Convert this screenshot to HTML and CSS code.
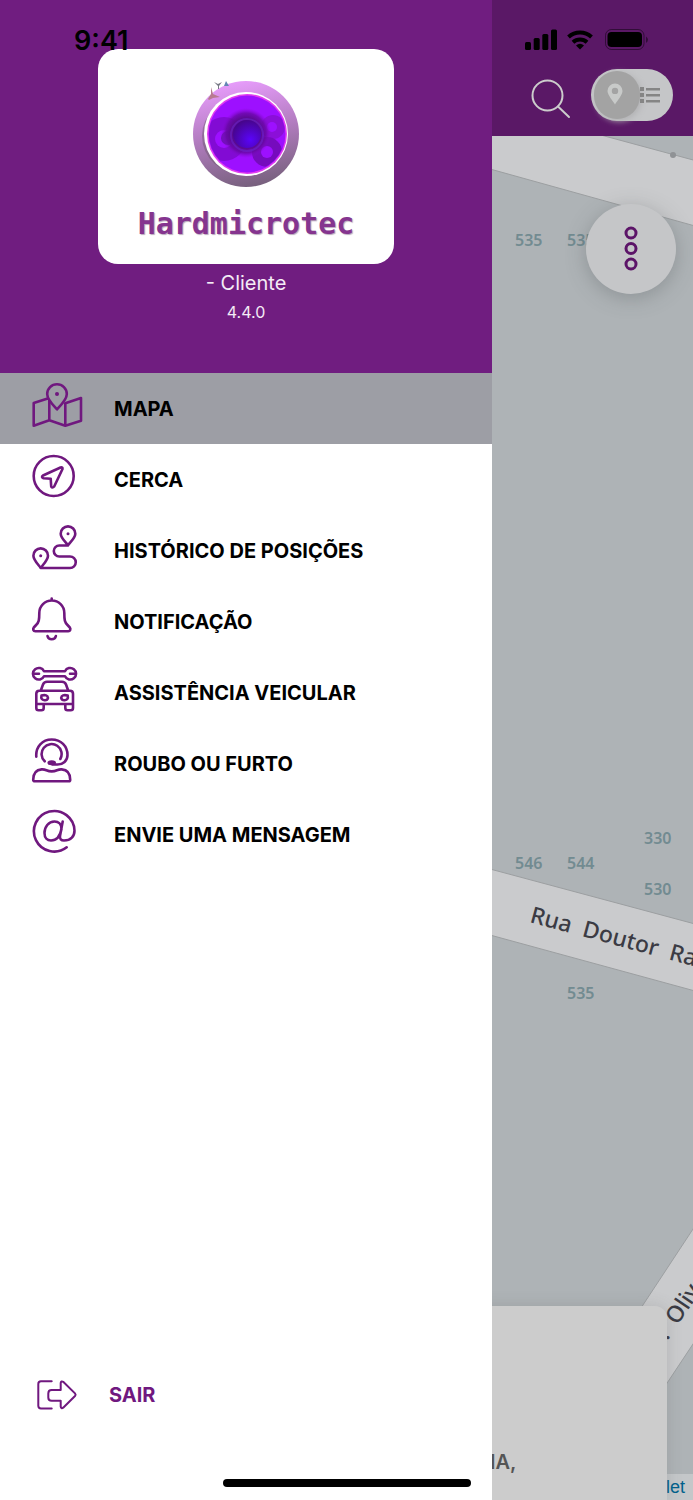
FILE: index.html
```html
<!DOCTYPE html>
<html lang="pt-BR">
<head>
<meta charset="utf-8">
<meta name="viewport" content="width=device-width, initial-scale=1">
<title>Hardmicrotec - Cliente</title>
<link rel="stylesheet" href="styles.css">
</head>
<body>
<div class="screen">
  <aside class="drawer">
    <header class="brand">
      <div class="logo">
        <svg class="emblem" viewBox="0 0 108 108" aria-hidden="true">
          <defs>
            <linearGradient id="rim" x1="0.4" y1="0" x2="0.6" y2="1">
              <stop offset="0" stop-color="#e79cfb"/>
              <stop offset="0.5" stop-color="#b07bbd"/>
              <stop offset="1" stop-color="#76607c"/>
            </linearGradient>
            <radialGradient id="halo">
              <stop offset="0.6" stop-color="#5a0a90"/>
              <stop offset="0.8" stop-color="#6808a4" stop-opacity="0.8"/>
              <stop offset="1" stop-color="#8a0bd8" stop-opacity="0"/>
            </radialGradient>
            <radialGradient id="core" cx="0.62" cy="0.7" r="0.7">
              <stop offset="0" stop-color="#5a04fa"/>
              <stop offset="1" stop-color="#46058c"/>
            </radialGradient>
            <clipPath id="lens"><circle cx="55" cy="54" r="38"/></clipPath>
          </defs>
          <circle cx="54" cy="54" r="53" fill="url(#rim)"/>
          <ellipse cx="52" cy="56" rx="42" ry="39" fill="#6d5a70" opacity="0.5"/>
          <circle cx="54" cy="54" r="42" fill="#fff"/>
          <circle cx="55" cy="54" r="40" fill="#e13df0"/>
          <circle cx="55" cy="54" r="38.500" fill="#9d10ff"/>
          <g clip-path="url(#lens)">
            <circle cx="32" cy="59" r="22" fill="#820bd4"/>
            <circle cx="32" cy="59" r="9" fill="#9d10ff"/>
            <circle cx="81" cy="47" r="12" fill="#8b0fd8"/>
            <circle cx="80" cy="47" r="5" fill="#9d10ff"/>
            <circle cx="75" cy="72" r="15" fill="#760bbd"/>
            <circle cx="75" cy="72" r="6" fill="#9d10ff"/>
            <circle cx="36" cy="58" r="7" fill="#7010b8"/>
          </g>
          <circle cx="54" cy="53" r="25" fill="url(#halo)"/>
          <circle cx="55" cy="55" r="16" fill="none" stroke="#7030e0" stroke-width="2" opacity="0.4"/>
          <circle cx="55" cy="54" r="14" fill="url(#core)"/>
          <path d="M19 7l2 7 7 3-7 1-4 2-1-1 3-5z" fill="#b87a91"/>
          <path d="M22 2l4 2 4-2-3 4v3h-1V6z" fill="#777985"/>
          <path d="M34 1l3 5h-5z" fill="#6386b4"/>
        </svg>
        <div class="wordmark">Hardmicrotec</div>
      </div>
      <div class="product">- Cliente</div>
      <div class="version">4.4.0</div>
    </header>
    <nav class="menu">
      <a class="item selected" href="#mapa">
        <svg class="icon" viewBox="0 0 54 48" aria-hidden="true"><path d="M19.300 17L3.700 22v22.700l15.600-5.400zM19.300 39.300l16 5.400V22.300L51 17v22.700l-15.700 5"/><path class="pin" d="M27 28.300c-3-3.300-9.800-9.300-9.800-15.300a9.800 9.800 0 0 1 19.600 0c0 6-6.800 12-9.800 15.300z"/><circle class="solid" cx="27" cy="13" r="2"/></svg>
        <span>MAPA</span>
      </a>
      <a class="item" href="#cerca">
        <svg class="icon" viewBox="0 0 54 48" aria-hidden="true"><circle cx="23.700" cy="24" r="20"/><path d="M30.500 15.500L13 23.500q-2.200 1.700.5 2.700l7.200.5.500 7.800q1.200 2 3 0L32.500 17q.3-2.200-2-1.500z"/></svg>
        <span>CERCA</span>
      </a>
      <a class="item" href="#historico">
        <svg class="icon" viewBox="0 0 54 48" aria-hidden="true"><path d="M38 22.300c-2-3-7.300-7.300-7.300-11.600a7.300 7.300 0 0 1 14.600 0c0 4.300-5.300 8.600-7.300 11.600zM10.700 45c-2-3-7.300-8-7.300-12.300a7.300 7.300 0 0 1 14.600 0c0 4.300-5.300 9.300-7.300 12.300zM38 22.500h-8.700a5.500 5.500 0 0 0 0 11H40A5.700 5.700 0 0 1 40 45H10.700"/><circle class="solid" cx="38" cy="10.700" r="1.500"/><circle class="solid" cx="10.700" cy="32.700" r="1.500"/></svg>
        <span>HISTÓRICO DE POSIÇÕES</span>
      </a>
      <a class="item" href="#notificacao">
        <svg class="icon" viewBox="0 0 54 48" aria-hidden="true"><path d="M21.700 4.500v2M9.300 19a12.500 12.500 0 0 1 25 0c0 7 .4 9.200 3.200 12l2.300 2.500c1.200 1.700.4 3.700-1.500 3.700h-33c-2 0-2.700-2-1.500-3.700L6.100 31c2.800-2.800 3.200-5 3.200-12zM17.500 42q.8 3.300 4.200 3.300t4.200-3.300"/></svg>
        <span>NOTIFICAÇÃO</span>
      </a>
      <a class="item" href="#assistencia">
        <svg class="icon" viewBox="0 0 54 48" aria-hidden="true"><path d="M14 6.300H35a5.800 5.800 0 1 1 0 4.900H14a5.800 5.800 0 1 1 0-4.900zM4.500 8.700h4.500M40 8.700h4.500M11 25l2-5.500q1-2.800 4-2.800h15q3 0 4 2.800l2 5.500M9.300 25.700h30.700q3 0 3 3v10.300H6.300V28.700q0-3 3-3zM6.300 39v4q0 2.300 2.300 2.300h2.800q2.300 0 2.300-2.300v-4M35.300 39v4q0 2.300 2.300 2.300h3.100q2.300 0 2.300-2.300v-4"/><path d="M11.500 30.500q6-1.500 6.500 2.500-.7 2.500-3.500 2.200-4-.4-3-4.700zM37.700 30.500q-6-1.500-6.500 2.500.7 2.500 3.500 2.200 4-.4 3-4.700z"/></svg>
        <span>ASSISTÊNCIA VEICULAR</span>
      </a>
      <a class="item" href="#roubo">
        <svg class="icon" viewBox="0 0 54 48" aria-hidden="true"><path d="M6.300 20.700C5.500 10.500 12.500 3.500 21.700 3.500S37.500 10 37.500 19c0 6-4.500 9.500-10 9.500h-5M14.700 25.300a10 10 0 1 1 15.600-2.300M5 45.300h34q1.200 0 1.200-1.500 0-9.600-8.500-10.400-2.200-.2-4.700.9-5.300 2.200-10.600 0-2.500-1.100-4.700-.9-8.500.8-8.500 10.400 0 1.500 1.800 1.500z"/><ellipse class="solid" cx="21.700" cy="26.800" rx="4.300" ry="2.500"/></svg>
        <span>ROUBO OU FURTO</span>
      </a>
      <a class="item" href="#mensagem">
        <svg class="icon" viewBox="0 0 54 48" aria-hidden="true"><path d="M36.700 40.300A20.300 20.300 0 1 1 44.500 23.700C44.500 29 41 33.500 34 33.500q-4.500 0-4-4.500L32.700 14.500M31.500 22c0-5-3-7.500-7-7.500-6 0-10 5.500-10 11.500 0 5 2.800 7.500 6.500 7.500 5 0 9-4 10.500-11.500z"/></svg>
        <span>ENVIE UMA MENSAGEM</span>
      </a>
    </nav>
    <button class="logout" type="button">
      <svg class="icon thin" viewBox="0 0 54 48" aria-hidden="true"><path d="M21.700 10.300H11q-2.700 0-2.700 2.700v21.700q0 2.700 2.700 2.700h10.700M30.700 19h-9q-3.400 0-3.400 3.400v4q0 3.400 3.400 3.400h9V35.500q.5 2.500 2.500 1.200L45 25q1.200-1.300 0-2.600L33.200 10.800q-2-1.200-2.500 1.200z"/></svg>
      <span>SAIR</span>
    </button>
  </aside>

  <main class="app">
    <header class="toolbar">
      <button class="search" type="button" aria-label="Buscar">
        <svg viewBox="0 0 40 40" aria-hidden="true"><circle cx="16.500" cy="16.500" r="15"/><path d="M27 27.500L38 38"/></svg>
      </button>
      <button class="view-switch" type="button" aria-label="Alternar mapa e lista">
        <span class="knob">
          <svg viewBox="0 0 16 22" aria-hidden="true"><path fill-rule="evenodd" d="M8 21.500C6 18 .5 12 .5 8a7.500 7.500 0 0 1 15 0c0 4-5.500 10-7.500 13.500zM8 4.700a3.200 3.200 0 1 0 0 6.400a3.200 3.200 0 0 0 0-6.400z"/></svg>
        </span>
        <svg class="list" viewBox="0 0 20 18" aria-hidden="true"><path d="M0 1h4v4H0zM0 7h4v4H0zM0 13h4v4H0zM6 2h14v2.500H6zM6 8h14v2.500H6zM6 14h14v2.500H6z"/></svg>
      </button>
    </header>
    <section class="map">
      <svg class="tiles" viewBox="0 0 201 1364" preserveAspectRatio="xMinYMin slice" role="img" aria-label="Mapa">
        <g class="road">
          <path d="M-2-31L203 24.500V90L-2 33z"/>
          <path d="M-2 733L203 788V855L-2 799z"/>
          <path d="M203 1090L120 1216V1330L203 1205z"/>
        </g>
        <circle cx="181" cy="19" r="3" fill="#8f9295"/>
        <g class="house">
          <text x="23" y="110">535</text>
          <text x="75" y="110">535</text>
          <text x="152" y="708">330</text>
          <text x="23" y="733">546</text>
          <text x="75" y="733">544</text>
          <text x="152" y="759">530</text>
          <text x="75" y="863">535</text>
        </g>
        <text class="street" transform="translate(37 786) rotate(15)">Rua  Doutor  Ra</text>
        <text class="street" transform="translate(169 1214) rotate(-56)">z.  Oliv</text>
      </svg>
      <button class="fab" type="button" aria-label="Mais opções">
        <svg viewBox="0 0 16 48" aria-hidden="true"><circle cx="8" cy="8" r="5"/><circle cx="8" cy="23.500" r="5"/><circle cx="8" cy="39" r="5"/></svg>
      </button>
      <a class="credit" href="#leaflet">let</a>
      <article class="sheet"><p>IA,</p></article>
    </section>
  </main>

  <div class="status">
    <span class="clock">9:41</span>
    <svg class="signals" viewBox="0 0 124 24" aria-hidden="true">
      <rect x="0" y="14" width="6" height="8" rx="1.500"/><rect x="8.700" y="10" width="6" height="12" rx="1.500"/><rect x="17.300" y="6" width="6" height="16" rx="1.500"/><rect x="26" y="1.500" width="6" height="20.500" rx="1.500"/>
      <g class="wave"><path d="M43.500 9a17 17 0 0 1 23 0M48 14.200a10.500 10.500 0 0 1 14 0"/></g>
      <path d="M51 17.500q4-3.600 8 0l-4 4z"/>
      <rect x="80.500" y="1.500" width="38.500" height="20" rx="6" fill="none" stroke="#000" stroke-opacity="0.45"/>
      <rect x="82.500" y="4" width="34.500" height="15" rx="4"/>
      <path d="M121 8.500q4 3 0 6.500z" opacity="0.45"/>
    </svg>
  </div>
  <div class="home-bar"></div>
</div>
</body>
</html>
```
FILE: styles.css
```css
:root {
  --purple: #701d80;
  --icon: #70187f;
  --selected: #9d9ea5;
  --ui: Inter, "Liberation Sans", sans-serif;
}

* { box-sizing: border-box; }

body {
  margin: 0;
  font-family: var(--ui);
  color: #000;
}

button {
  border: 0;
  padding: 0;
  background: none;
  font: inherit;
  color: inherit;
}

svg { display: block; }

.screen {
  position: relative;
  display: grid;
  grid-template-columns: 71fr 29fr;
  min-height: 100vh;
  overflow: hidden;
}

.drawer {
  display: flex;
  flex-direction: column;
  background: #fff;
}

.brand {
  display: flex;
  flex-direction: column;
  align-items: center;
  padding: 49px 20px 49px;
  background: var(--purple);
  color: #f4ecf6;
}

.logo {
  display: flex;
  flex-direction: column;
  align-items: center;
  width: 296px;
  max-width: 100%;
  padding: 31px 0 22px;
  border-radius: 20px;
  background: #fff;
}

.emblem { width: 108px; height: 108px; }

.wordmark {
  margin-top: 18px;
  font: 700 30px/36px "DejaVu Sans Mono", monospace;
  color: #85358f;
  text-shadow: 1px 1px 1px #b9a9bc;
}

.product {
  margin-top: 5px;
  font-size: 20px;
  line-height: 28px;
}

.version {
  margin-top: 3px;
  font-size: 16px;
  line-height: 24px;
}

.menu { flex: 1; }

.item,
.logout {
  display: flex;
  align-items: center;
  font-size: 20px;
  font-weight: 700;
  text-decoration: none;
}

.item {
  gap: 30px;
  height: 71px;
  padding-left: 30px;
  color: #000;
}

.item.selected { background: var(--selected); }

.icon {
  width: 54px;
  height: 48px;
  fill: none;
  stroke: var(--icon);
  stroke-width: 2.6;
  stroke-linecap: round;
  stroke-linejoin: round;
}

.item .icon { margin-bottom: 7px; }

.icon.thin { stroke-width: 2; }

.icon .solid { fill: var(--icon); stroke: none; }

.icon .pin { fill: var(--selected); }

.logout {
  gap: 25px;
  margin: 0 0 81px 30px;
  color: var(--icon);
}

.app {
  display: flex;
  flex-direction: column;
  min-width: 0;
}

.toolbar {
  display: flex;
  align-items: center;
  justify-content: flex-end;
  gap: 20px;
  height: 136px;
  padding: 54px 20px 0 0;
  background: #5a1866;
}

.search svg {
  width: 40px;
  height: 40px;
  margin-top: 8px;
  fill: none;
  stroke: #cccccc;
  stroke-width: 2;
  stroke-linecap: round;
}

.view-switch {
  display: flex;
  align-items: center;
  width: 82px;
  height: 52px;
  padding-left: 3px;
  border-radius: 26px;
  background: #c5c6c8;
}

.knob {
  display: grid;
  place-items: center;
  width: 46px;
  height: 48px;
  border-radius: 24px;
  background: #a3a3a3;
  box-shadow: 2px 2px 6px #b2b2b4;
}

.knob svg { width: 16px; height: 22px; margin: 0 5px 2px 0; fill: #c8cac9; }

.list { width: 20px; height: 18px; fill: #858585; }

.map {
  position: relative;
  flex: 1;
  overflow: hidden;
  background: #aeb3b6;
}

.tiles {
  position: absolute;
  inset: 0;
  width: 100%;
  height: 100%;
}

.road { fill: #cacbcd; stroke: #9c9fa1; stroke-width: 1; }

.house { font: 600 16px "Noto Sans", sans-serif; fill: #728b91; }

.street {
  font: 500 23px "Noto Sans", sans-serif;
  fill: #3b3b44;
  white-space: pre;
}

.fab {
  position: absolute;
  top: 68px;
  right: 17px;
  display: grid;
  place-items: center;
  width: 90px;
  height: 90px;
  border-radius: 50%;
  background: #c5c6c8;
  box-shadow: 0 4px 20px rgba(80, 85, 90, 0.35);
}

.fab svg {
  width: 16px;
  height: 48px;
  fill: none;
  stroke: #5c1468;
  stroke-width: 3;
}

.sheet {
  position: absolute;
  left: -24px;
  right: 26px;
  bottom: 0;
  padding: 143px 22px 24px;
  border-radius: 12px 12px 0 0;
  background: #cccccc;
  box-shadow: 0 0 16px rgba(90, 90, 90, 0.2);
}

.sheet p {
  margin: 0;
  font-size: 20px;
  font-weight: 600;
  line-height: 27px;
  color: #555;
}

.credit {
  position: absolute;
  right: 0;
  bottom: 0;
  padding: 0 8px 0 20px;
  background: #c4c7c9;
  color: #00618c;
  font: 18px/26px "Liberation Sans", sans-serif;
  text-decoration: none;
}

.status {
  position: absolute;
  inset: 24px 0 auto 0;
  display: flex;
  justify-content: space-between;
  align-items: center;
  height: 32px;
  padding: 0 44px 0 74px;
  pointer-events: none;
}

.clock { font-size: 27px; font-weight: 600; }

.signals { width: 124px; height: 24px; }

.wave { fill: none; stroke: #000; stroke-width: 4; }

.home-bar {
  position: absolute;
  bottom: 13px;
  left: 50%;
  width: 248px;
  height: 8px;
  margin-left: -124px;
  border-radius: 4px;
  background: #000;
}
```
